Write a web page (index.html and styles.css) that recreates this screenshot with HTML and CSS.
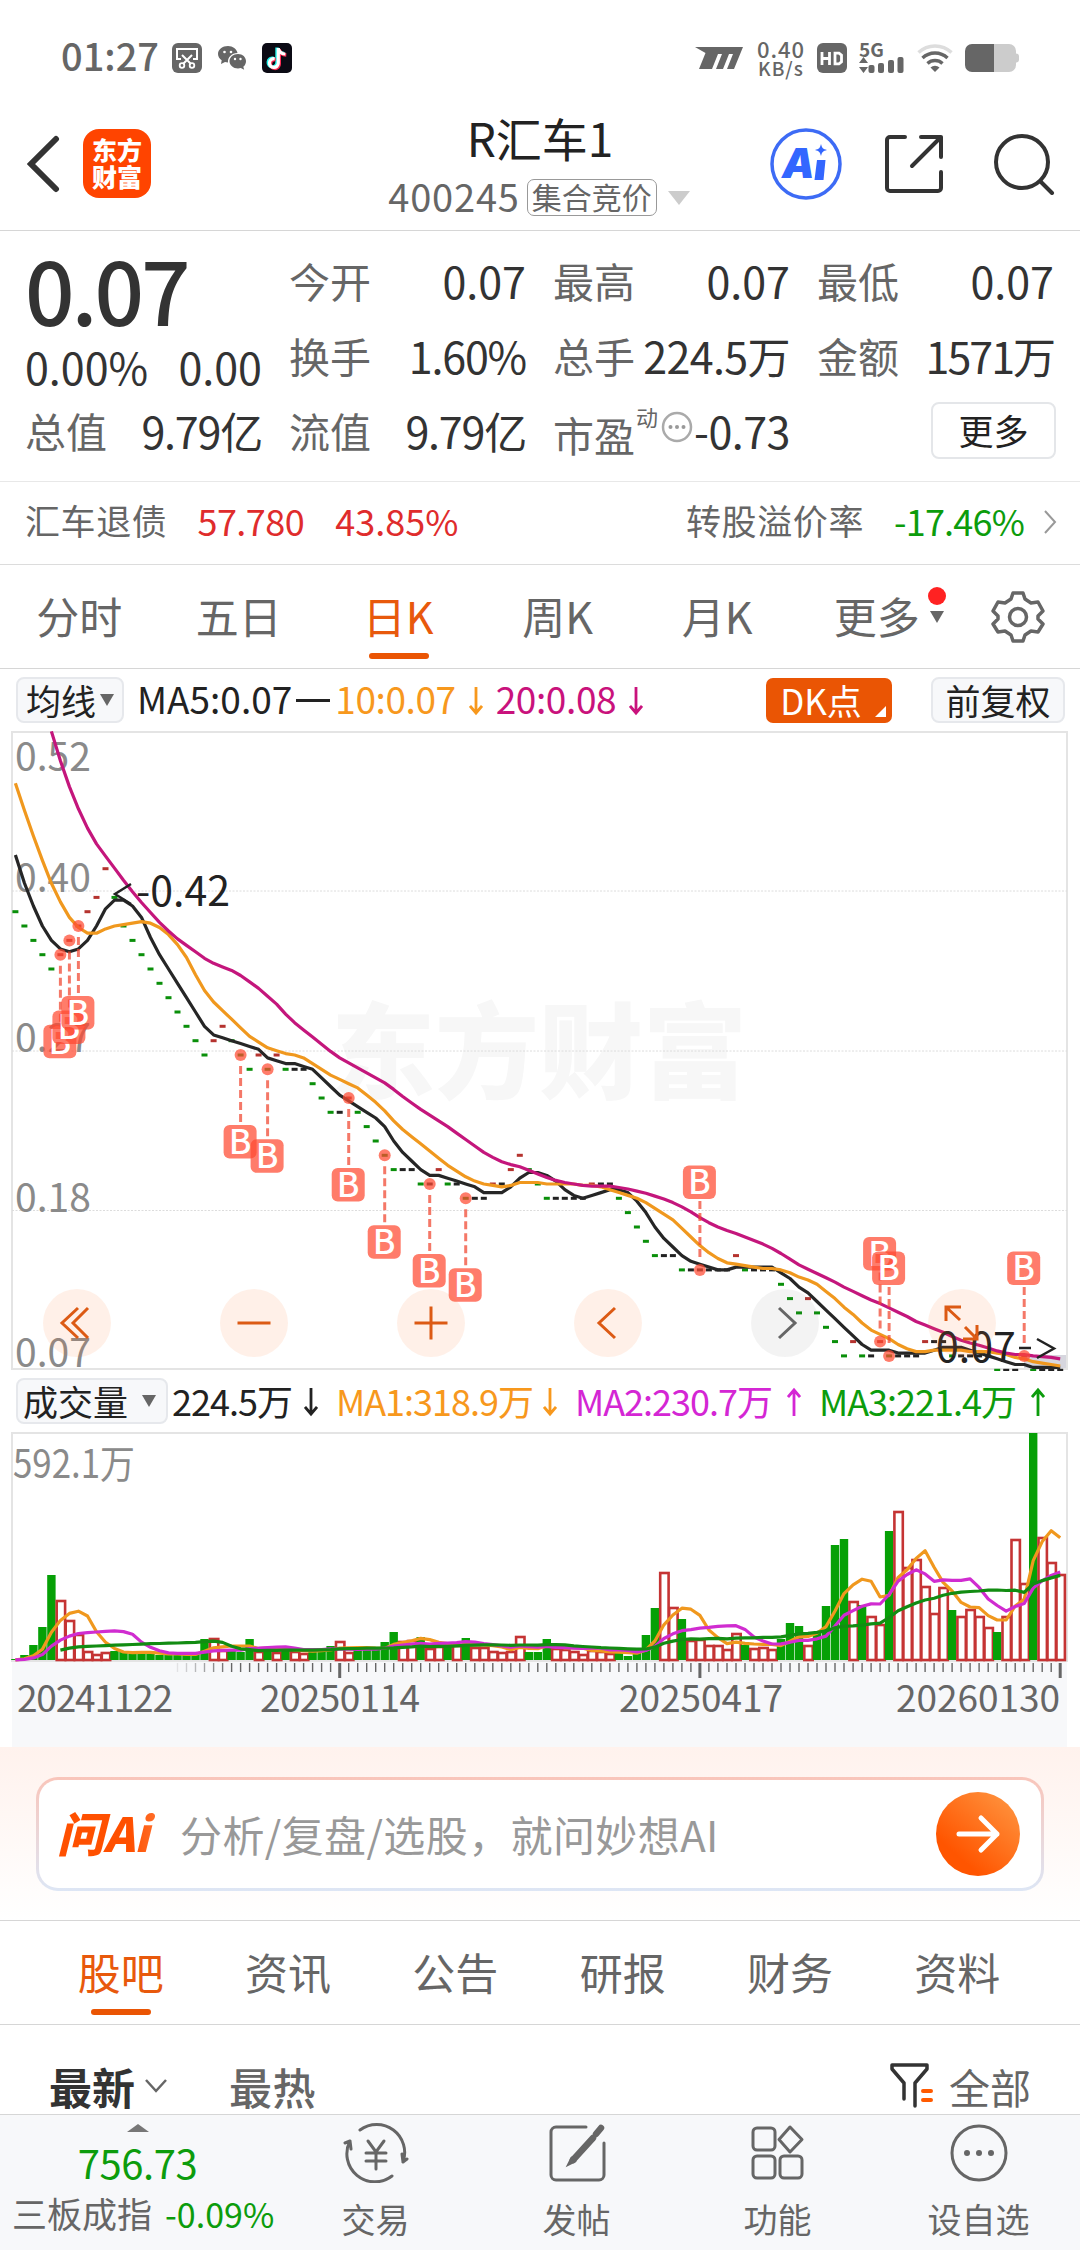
FILE: index.html
```html
<!DOCTYPE html>
<html lang="zh-CN">
<head>
    <meta charset="UTF-8">
    <meta name="viewport" content="width=device-width, initial-scale=1.0">
    <title>R汇车1 400245</title>
    <link rel="stylesheet" href="styles.css">
</head>
<body>
    <div class="status-bar">
        <span class="clock">01:27</span>
        <svg class="st-cut" width="30" height="30" viewBox="0 0 30 30">
            <rect width="30" height="30" rx="6" fill="#666"/>
            <path d="M9 16H5V6h20v10h-4M10 12l9 9M20 12l-9 9" fill="none" stroke="#fff" stroke-width="2"/>
            <circle cx="10" cy="22.500" r="2.300" fill="none" stroke="#fff" stroke-width="1.800"/>
            <circle cx="20" cy="22.500" r="2.300" fill="none" stroke="#fff" stroke-width="1.800"/>
        </svg>
        <svg class="st-wechat" width="28" height="26" viewBox="0 0 28 26">
            <path d="M10 1C4.500 1 0 4.500 0 9c0 2.600 1.400 4.800 3.700 6.300L3 19l4-2 3 .5c-.6-5 3.600-9.500 9.500-9.500C18.700 4 14.800 1 10 1z" fill="#666"/>
            <path d="M20 9c-4.700 0-8.500 3.200-8.500 7.200s3.800 7.200 8.500 7.200l2.800-.4 3.400 1.800-.9-3c1.700-1.400 2.700-3.400 2.700-5.600C28 12.200 24.700 9 20 9z" fill="#666"/>
            <circle cx="6.500" cy="7" r="1.300" fill="#fff"/><circle cx="13" cy="7" r="1.300" fill="#fff"/>
            <circle cx="17" cy="14" r="1.200" fill="#fff"/><circle cx="22.500" cy="14" r="1.200" fill="#fff"/>
        </svg>
        <svg class="st-tiktok" width="30" height="30" viewBox="0 0 30 30">
            <rect width="30" height="30" rx="5" fill="#0b0a14"/>
            <path d="M15 4.500v15a4.400 4.400 0 1 1-3.600-4.300M15 5c.8 3.500 3.600 5.300 7 5.500" fill="none" stroke="#25f4ee" stroke-width="3.400"/>
            <path d="M17.300 6v15a4.400 4.400 0 1 1-3.600-4.300M17.300 6.500c.8 3.500 3.600 5.300 7 5.500" fill="none" stroke="#fe2c55" stroke-width="3.400"/>
            <path d="M16.300 5v15a4.400 4.400 0 1 1-3.600-4.300M16.300 5.500c.8 3.500 3.600 5.300 7 5.500" fill="none" stroke="#fff" stroke-width="3.200"/>
        </svg>
        <span class="spacer"></span>
        <svg class="st-m" width="48" height="24" viewBox="0 0 48 24">
            <path d="M0 1h48l-9 22h-7l6-15h-4l-6 15h-7l6-15h-4l-6 15H4l6.500-16z" fill="#666"/>
        </svg>
        <div class="speed"><b>0.40</b><span>KB/s</span></div>
        <svg class="st-hd" width="30" height="30" viewBox="0 0 30 30">
            <rect width="30" height="30" rx="6" fill="#666"/>
            <path d="M5 9v13M12.500 9v13M5 15.500h7.500M18 10.200h4l2.500 2v6.600l-2.500 2h-4z" fill="none" stroke="#fff" stroke-width="2.800"/>
        </svg>
        <div class="signal">
            <b>5G</b>
            <svg width="45" height="18" viewBox="0 0 45 18" fill="#666">
                <path d="M0 7l4.500-6L9 7zM0 11h9l-4.500 6z"/>
                <rect x="9.500" y="9" width="6" height="8" rx="2"/><rect x="19" y="7" width="6" height="10" rx="2"/>
                <rect x="29" y="4" width="6" height="13" rx="2"/><rect x="38.500" y="1" width="6" height="16" rx="2"/>
            </svg>
        </div>
        <svg class="st-wifi" width="36" height="30" viewBox="0 0 36 30" fill="none" stroke="#666" stroke-width="3.400">
            <path d="M1.500 9.500a24 24 0 0 1 33 0" stroke="#ddd"/>
            <path d="M5.500 15a18 18 0 0 1 25 0M10.500 20.500a11 11 0 0 1 15 0"/>
            <path d="M13.500 24.500a6.500 6.500 0 0 1 9 0L18 29z" fill="#666" stroke="none"/>
        </svg>
        <svg class="st-battery" width="54" height="28" viewBox="0 0 54 28">
            <path d="M29 0h15a7 7 0 0 1 7 7v2.500a3 3 0 0 1 3 3v3a3 3 0 0 1-3 3V21a7 7 0 0 1-7 7H29z" fill="#ccc"/>
            <path d="M7 0h22v28H7a7 7 0 0 1-7-7V7a7 7 0 0 1 7-7z" fill="#666"/>
        </svg>
    </div>

    <header>
        <svg class="back" width="34" height="58" viewBox="0 0 34 58">
            <path d="M29 4L4 29l25 25" fill="none" stroke="#333" stroke-width="6" stroke-linecap="round"/>
        </svg>
        <div class="logo">东方<br>财富</div>
        <div class="title">
            <h1>R汇车1</h1>
            <div class="code">
                <span>400245</span><span class="badge">集合竞价</span><i class="tri-down big"></i>
            </div>
        </div>
        <svg class="ai" width="72" height="74" viewBox="0 0 72 74">
            <circle cx="36" cy="37" r="34" fill="none" stroke="#3d6bf5" stroke-width="3.500"/>
            <text x="12" y="51" class="ai-text">A</text>
            <path d="M47 33h8.500l-2 20h-9zM51 17c1 4 2 5 6 6-4 1-5 2-6 6-1-4-2-5-6-6 4-1 5-2 6-6z" fill="#3366ff"/>
        </svg>
        <svg class="share" width="60" height="60" viewBox="0 0 60 60" fill="none" stroke="#333" stroke-width="4" stroke-linecap="round" stroke-linejoin="round">
            <path d="M21 3H6a3 3 0 0 0-3 3v48a3 3 0 0 0 3 3h48a3 3 0 0 0 3-3V38M37 3h20v20M57 3L28 32"/>
        </svg>
        <svg class="search" width="62" height="62" viewBox="0 0 62 62" fill="none" stroke="#333" stroke-width="4" stroke-linecap="round">
            <circle cx="29" cy="29" r="26"/><path d="M48 49l11 11"/>
        </svg>
    </header>

    <section class="quote">
        <div class="now">
            <div class="price">0.07</div>
            <div class="change"><span>0.00%</span><span>0.00</span></div>
            <div class="cell"><label>总值</label><span class="tight">9.79亿</span></div>
        </div>
        <div class="cells">
            <div class="cell"><label>今开</label><span>0.07</span></div>
            <div class="cell"><label>最高</label><span>0.07</span></div>
            <div class="cell"><label>最低</label><span>0.07</span></div>
            <div class="cell"><label>换手</label><span class="tight">1.60%</span></div>
            <div class="cell"><label>总手</label><span class="snug">224.5万</span></div>
            <div class="cell"><label>金额</label><span class="tighter">1571万</span></div>
            <div class="cell"><label>流值</label><span class="tight">9.79亿</span></div>
            <div class="cell"><label>市盈<sup>动</sup></label>
                <svg class="info" width="32" height="32" viewBox="0 0 32 32">
                    <circle cx="16" cy="16" r="14" fill="none" stroke="#aaa" stroke-width="2.500"/>
                    <g fill="#999"><circle cx="9.500" cy="16" r="2"/><circle cx="16" cy="16" r="2"/><circle cx="22.500" cy="16" r="2"/></g>
                </svg>
                <span class="pe">-0.73</span></div>
            <div class="cell more"><button>更多</button></div>
        </div>
    </section>

    <section class="bond">
        <span class="name">汇车退债</span>
        <span class="red bond-price">57.780</span>
        <span class="red">43.85%</span>
        <span class="spacer"></span>
        <span class="name">转股溢价率</span>
        <span class="green premium">-17.46%</span>
        <svg width="14" height="26" viewBox="0 0 14 26"><path d="M2 2l10 11L2 24" fill="none" stroke="#999" stroke-width="2"/></svg>
    </section>

    <nav class="periods">
        <a>分时</a><a>五日</a><a class="active">日K</a><a>周K</a><a>月K</a>
        <a class="has-more">更多<i class="dot"></i><i class="tri-down"></i></a>
        <svg width="54" height="54" viewBox="0 0 54 54" fill="none" stroke="#666" stroke-width="3.500" stroke-linejoin="round">
            <path d="M22 3h10l2 6 6 4 7-1 5 9-5 5v3l5 5-5 8-7-1-6 4-2 6H22l-2-6-6-4-7 1-5-8 5-5v-3l-5-5 5-9 7 1 6-4z"/>
            <circle cx="27" cy="27" r="8.500"/>
        </svg>
    </nav>

    <div class="legend ma-legend">
        <button class="select">均线<i class="tri-down"></i></button>
        <span class="ma5">MA5:0.07<i class="flat"></i></span>
        <span class="orange">10:0.07<svg class="arrow"><use href="#down"/></svg></span>
        <span class="magenta">20:0.08<svg class="arrow"><use href="#down"/></svg></span>
        <span class="spacer"></span>
        <button class="dk">DK点</button>
        <button class="fq">前复权</button>
    </div>

    <div class="kline">
        <svg id="kline" width="1080" height="640" viewBox="0 731 1080 640"></svg>
        <div class="tools">
            <i><svg viewBox="0 0 68 68"><path d="M35 19L19 34l16 15M45 19L30 34l15 15"/></svg></i>
            <i><svg viewBox="0 0 68 68"><path d="M17.500 34h33"/></svg></i>
            <i><svg viewBox="0 0 68 68"><path d="M17.500 34h33M34 17.500v33"/></svg></i>
            <i><svg viewBox="0 0 68 68"><path d="M41 19L25 34l16 15"/></svg></i>
            <i class="off"><svg viewBox="0 0 68 68"><path d="M28 19l16 15-16 15"/></svg></i>
            <i><svg viewBox="0 0 68 68"><path d="M18 32V18h15M18 18l14 13M49 36v14H35M49 50L37 38"/></svg></i>
        </div>
    </div>

    <div class="legend vol-legend">
        <button class="select">成交量<i class="tri-down"></i></button>
        <span class="v0">224.5万<svg class="arrow"><use href="#down"/></svg></span>
        <span class="orange v1">MA1:318.9万<svg class="arrow"><use href="#down"/></svg></span>
        <span class="purple v2">MA2:230.7万<svg class="arrow"><use href="#up"/></svg></span>
        <span class="green v3">MA3:221.4万<svg class="arrow"><use href="#up"/></svg></span>
    </div>

    <svg id="volume" width="1080" height="315" viewBox="0 1432 1080 315"></svg>

    <section class="ask">
        <div class="ask-box">
            <span class="ask-logo">问Ai</span>
            <span class="ask-hint">分析/复盘/选股，就问妙想AI</span>
            <svg width="84" height="84" viewBox="0 0 84 84">
                <defs><linearGradient id="go" x1="1" y1="0" x2=".3" y2=".8"><stop offset="0" stop-color="#ff9a45"/><stop offset="1" stop-color="#ff5500"/></linearGradient></defs>
                <circle cx="42" cy="42" r="42" fill="url(#go)"/>
                <path d="M23 42h38M45 26l16 16-16 16" fill="none" stroke="#fff" stroke-width="5" stroke-linecap="round" stroke-linejoin="round"/>
            </svg>
        </div>
    </section>

    <nav class="sections">
        <a class="active">股吧</a><a>资讯</a><a>公告</a><a>研报</a><a>财务</a><a>资料</a>
    </nav>

    <div class="sort">
        <b>最新</b>
        <svg width="24" height="16" viewBox="0 0 24 16"><path d="M2 2l10 11L22 2" fill="none" stroke="#666" stroke-width="2.500"/></svg>
        <span class="hot">最热</span>
        <span class="spacer"></span>
        <svg width="44" height="46" viewBox="0 0 44 46" fill="none" stroke="#333" stroke-width="3.500" stroke-linecap="round" stroke-linejoin="round">
            <path d="M14 36V20L2 6V2h35v4L25 20v23"/>
            <path d="M33 28h8M33 37h8" stroke="#ff5a00" stroke-width="4"/>
        </svg>
        <span class="all">全部</span>
    </div>

    <footer>
        <div class="index">
            <i class="tri-up"></i>
            <strong>756.73</strong>
            <div>三板成指<em>-0.09%</em></div>
        </div>
        <a>
            <svg width="66" height="60" viewBox="0 0 66 60" fill="none" stroke="#666" stroke-width="3" stroke-linecap="round">
                <path d="M17 7a28 28 0 0 1 43 32M60 39l4-3M60 39l-1-8M49 53A28 28 0 0 1 7 18M7 18l-5 2M7 18l1 8"/>
                <path d="M25 18l8 11 8-11M33 29v17M23 30h20M23 38h20"/>
            </svg>
            交易
        </a>
        <a>
            <svg width="58" height="60" viewBox="0 0 58 60" fill="none" stroke="#666" stroke-width="3" stroke-linecap="round">
                <path d="M38 4H8a5 5 0 0 0-5 5v43a5 5 0 0 0 5 5h43a5 5 0 0 0 5-5V20"/>
                <path d="M53 5L48 11M45 15L25 37" stroke-width="6.500"/><path d="M24 35l-3 6 6-3"/>
            </svg>
            发帖
        </a>
        <a>
            <svg width="56" height="60" viewBox="0 0 56 60" fill="none" stroke="#666" stroke-width="3" stroke-linejoin="round">
                <rect x="3" y="5" width="22" height="22" rx="4"/><path d="M40 4l12 12.500L40 29 29 16.500z"/>
                <rect x="3" y="33" width="22" height="22" rx="4"/><rect x="30" y="33" width="22" height="22" rx="4"/>
            </svg>
            功能
        </a>
        <a>
            <svg width="60" height="60" viewBox="0 0 60 60" fill="none" stroke="#666" stroke-width="3">
                <circle cx="30" cy="30" r="27"/>
                <g fill="#666" stroke="none"><circle cx="18" cy="30" r="3"/><circle cx="30" cy="30" r="3"/><circle cx="42" cy="30" r="3"/></g>
            </svg>
            设自选
        </a>
    </footer>

    <!-- shared arrows -->
    <svg class="symbols">
        <symbol id="down" viewBox="0 0 14 30"><path d="M7 1v26M1 20l6 7 6-7" fill="none" stroke="currentColor" stroke-width="2.800"/></symbol>
        <symbol id="up" viewBox="0 0 14 30"><path d="M7 29V3M1 10l6-7 6 7" fill="none" stroke="currentColor" stroke-width="2.800"/></symbol>
    </svg>
    <script src="chart.js"></script>
</body>
</html>
```

FILE: styles.css
```css
* {
    box-sizing: border-box;
}

body {
    margin: 0;
    width: 1080px;
    height: 2250px;
    overflow: hidden;
    background: #fff;
    color: #333;
    font-family: "Noto Sans CJK SC", "Noto Sans", sans-serif;
    line-height: 1;
}

svg {
    display: block;
    flex: none;
}

i, em {
    font-style: normal;
}

button {
    font-family: inherit;
    padding: 0;
    white-space: nowrap;
}

.spacer {
    flex: 1;
}

.symbols {
    width: 0;
    height: 0;
}

.red { color: #df2c2c; }
.green { color: #0c9c0c; }
.orange { color: #f7981d; }
.magenta { color: #c9127c; }
.purple { color: #d426d4; }

.tri-down {
    display: inline-block;
    border: 7px solid transparent;
    border-top: 12px solid #666;
    border-bottom: 0;
}

.tri-down.big {
    border-width: 14px 11px 0;
    border-top-color: #ccc;
}

.tri-up {
    border: 11px solid transparent;
    border-bottom: 8px solid #777;
    border-top: 0;
}

/* status bar */

.status-bar {
    display: flex;
    align-items: center;
    height: 115px;
    padding: 1px 61px 0 61px;
    color: #666;
}

.clock {
    font-size: 38px;
    font-weight: 500;
    margin-top: -6px;
    width: 111px;
}

.st-wechat {
    margin: 0 16px 0 16px;
}

.speed {
    width: 50px;
    margin: 0 11px 0 13px;
    text-align: center;
    font-weight: 500;
}

.speed b {
    display: block;
    font-size: 22px;
    font-weight: 500;
    line-height: 20px;
    letter-spacing: 1px;
}

.speed span {
    display: block;
    font-size: 19px;
    line-height: 20px;
    letter-spacing: 1px;
}

.signal {
    width: 46px;
    margin: 0 12px;
}

.signal b {
    display: block;
    font-size: 19px;
    line-height: 14px;
}

.st-battery {
    margin-left: 12px;
}

/* header */

header {
    display: flex;
    align-items: center;
    height: 116px;
    padding: 0 25px 18px 27px;
    border-bottom: 1px solid #d6d6d6;
}

.logo {
    width: 68px;
    height: 69px;
    margin-left: 22px;
    padding-top: 7px;
    border-radius: 16px;
    background: #ff4400;
    color: #fff;
    font-size: 25px;
    font-weight: 900;
    line-height: 27px;
    text-align: center;
}

.title {
    width: 460px;
    margin-left: 159px;
    padding-top: 9px;
    text-align: center;
}

h1 {
    margin: 0 0 8px;
    color: #222;
    font-size: 46px;
    font-weight: 400;
    line-height: 52px;
}

.code {
    display: flex;
    align-items: center;
    justify-content: center;
    height: 54px;
    padding-bottom: 1px;
    margin-left: -2px;
    color: #666;
    font-size: 38px;
}

.code > span:first-child {
    letter-spacing: .8px;
    margin-top: -4px;
}

.badge {
    height: 37px;
    margin: 0 11px 0 7px;
    padding: 0 4px;
    border: 1px solid #999;
    border-radius: 7px;
    font-size: 30px;
    line-height: 32px;
}

.ai {
    margin-left: 0;
}

.ai-text {
    fill: #3366ff;
    font-family: Inter, sans-serif;
    font-size: 41px;
    font-weight: 900;
    font-style: italic;
}

.share {
    margin-left: 42px;
}

.search {
    margin-left: auto;
}

/* quote */

.quote {
    display: flex;
    height: 251px;
    padding: 14px 26px 0;
    border-bottom: 1px solid #e8e8e8;
    font-size: 43px;
}

.now {
    width: 237px;
    margin-left: -1px;
    margin-right: 27px;
}

.price {
    height: 86px;
    font-size: 87px;
    font-weight: 500;
    line-height: 87px;
    letter-spacing: -3px;
}

.change {
    display: flex;
    justify-content: space-between;
    height: 64px;
    line-height: 71px;
}

.cells {
    display: grid;
    grid-template-columns: 237px 237px 237px;
    grid-auto-rows: 75px;
    column-gap: 27px;
}

.cell {
    display: flex;
    align-items: center;
    justify-content: space-between;
    height: 75px;
    padding-bottom: 5px;
    white-space: nowrap;
}

.cell label {
    color: #666;
    font-size: 41px;
}

.snug { letter-spacing: -.6px; }
.tight { letter-spacing: -1.2px; }
.tighter { letter-spacing: -2px; }

sup {
    display: inline-block;
    font-size: 22px;
    line-height: 1;
    height: 0;
    vertical-align: 26px;
    margin-left: 1px;
}

.info {
    margin: -6px 0 0 -3px;
}

.pe {
    margin-left: -5px;
    letter-spacing: -.5px;
}

.more {
    justify-content: flex-end;
}

.more button {
    width: 125px;
    height: 57px;
    margin-right: -2px;
    border: 2px solid #e4e6e9;
    border-radius: 8px;
    background: #fff;
    color: #222;
    font-size: 35px;
    line-height: 46px;
}

/* bond */

.bond {
    display: flex;
    align-items: center;
    height: 83px;
    padding: 0 23px 7px 25px;
    border-bottom: 1px solid #dcdcdc;
    font-size: 36px;
}

.name {
    color: #666;
    font-size: 35px;
    letter-spacing: .6px;
}

.bond-price {
    margin: 0 31px 0 30px;
    letter-spacing: -.5px;
}

.premium {
    margin: 0 19px 0 30px;
    letter-spacing: -.8px;
}

.bond svg {
    margin-top: 4px;
}

/* periods */

.periods {
    display: flex;
    align-items: center;
    height: 104px;
    border-bottom: 1px solid #d6d6d6;
    color: #666;
    font-size: 43px;
}

.periods a {
    width: 159.500px;
    padding: 0 1px 2px 0;
    text-align: center;
}

.active {
    position: relative;
    color: #e8590c;
}

.active::after {
    content: "";
    position: absolute;
    left: 50%;
    bottom: -20px;
    width: 60px;
    height: 6px;
    margin-left: -30px;
    border-radius: 3px;
    background: #ea5504;
}

.has-more {
    position: relative;
}

.has-more .dot {
    position: absolute;
    right: 11px;
    top: -7px;
    width: 18px;
    height: 18px;
    border-radius: 50%;
    background: #f22;
}

.has-more .tri-down {
    position: absolute;
    right: 13px;
    top: 17px;
}

.periods svg {
    margin-left: 34px;
}

/* legends */

.legend {
    display: flex;
    align-items: center;
    height: 62px;
    color: #222;
    font-size: 37px;
}

.legend > span {
    display: flex;
    align-items: center;
    padding-bottom: 3px;
    white-space: nowrap;
}

.legend .spacer {
    flex: 1;
}

.select, .fq {
    height: 46px;
    border: 2px solid #e6e8ec;
    border-radius: 8px;
    background: #f7f8fa;
    color: #222;
    font-size: 35px;
    line-height: 38px;
}

.ma-legend {
    padding: 0 15px 0 16px;
}

.ma-legend .select {
    display: flex;
    align-items: center;
    width: 108px;
    padding-left: 8px;
}

.ma-legend .select .tri-down {
    margin-left: 4px;
}

.ma5 {
    margin-left: 13px;
}

.flat {
    width: 34px;
    height: 3px;
    margin: 4px 5px 0 4px;
    background: #222;
}

.ma-legend .orange, .ma-legend .magenta {
    letter-spacing: -.4px;
}

.ma-legend .magenta {
    margin-left: 13px;
}

.arrow {
    width: 14px;
    height: 30px;
    margin: 4px 0 0 13px;
}

.dk {
    position: relative;
    width: 126px;
    height: 45px;
    margin-right: 39px;
    padding-right: 16px;
    border: 0;
    border-radius: 7px;
    background: #ea5504;
    color: #fff;
    font-size: 35px;
    line-height: 40px;
}

.dk::after {
    content: "";
    position: absolute;
    right: 6px;
    bottom: 6px;
    border-left: 11px solid transparent;
    border-bottom: 11px solid #fff;
}

.fq {
    width: 134px;
}

/* k line chart */

.kline {
    position: relative;
    height: 639px;
}

.tools {
    position: absolute;
    left: 42.500px;
    top: 558px;
    display: flex;
    gap: 109px;
}

.tools i {
    width: 68px;
    height: 68px;
    border-radius: 50%;
    background: rgba(255, 120, 50, .11);
}

.tools .off {
    background: rgba(100, 100, 100, .08);
}

.tools path {
    fill: none;
    stroke: #dc5a14;
    stroke-width: 3;
}

.tools .off path {
    stroke: #666;
}

#kline, #volume {
    font-family: "Noto Sans CJK SC", "Noto Sans", sans-serif;
}

.axis {
    fill: #8a8a8a;
    font-size: 39px;
}

.date {
    fill: #666;
    font-size: 37px;
}

.peak {
    fill: #222;
    font-size: 41px;
}

.watermark {
    fill: #f7f7f7;
    font-size: 104px;
    font-weight: 900;
}

.sign {
    fill: #fff;
    font-size: 34px;
    font-weight: 500;
    text-anchor: middle;
}

.line {
    fill: none;
    stroke-width: 3.200;
    stroke-linejoin: round;
}

.vol-legend {
    padding-left: 16px;
    font-size: 36px;
    letter-spacing: -1px;
}

.vol-legend .select {
    display: flex;
    align-items: center;
    width: 152px;
    padding-left: 5px;
    letter-spacing: 0;
}

.vol-legend .select .tri-down {
    margin-left: 14px;
}

.vol-legend > span {
    justify-content: space-between;
}

.v0 { width: 146px; margin-left: 4px; }
.v1 { width: 221px; margin-left: 18px; }
.v2 { width: 226px; margin-left: 18px; }
.v3 { width: 226px; margin-left: 18px; }

.vol-legend .arrow {
    margin-left: 0;
}

/* ask */

.ask {
    height: 174px;
    padding: 30px 36px 0;
    border-bottom: 1px solid #d6d6d6;
    background: linear-gradient(#fff2ed, #fff);
}

.ask-box {
    display: flex;
    align-items: center;
    height: 114px;
    padding: 0 21px 0 18px;
    border: 3px solid transparent;
    border-radius: 22px;
    background: linear-gradient(#fff, #fff) padding-box, linear-gradient(#f9c5ba, #dde6f5) border-box;
}

.ask-logo {
    width: 123px;
    background: linear-gradient(90deg, #ff5000 60%, #ff8a50);
    -webkit-background-clip: text;
    color: transparent;
    font-size: 47px;
    font-weight: 900;
    font-style: italic;
    line-height: 60px;
    letter-spacing: -.5px;
    white-space: nowrap;
    padding-bottom: 5px;
}

.ask-hint {
    flex: 1;
    color: #999;
    font-size: 42px;
    letter-spacing: .4px;
    white-space: nowrap;
}

/* sections */

.sections {
    display: flex;
    align-items: center;
    height: 104px;
    padding: 0 39px 0 37px;
    border-bottom: 1px solid #d6d6d6;
    color: #666;
    font-size: 43px;
}

.sections a {
    flex: 1;
    text-align: center;
    padding-bottom: 2px;
}

/* sort row */

.sort {
    display: flex;
    align-items: center;
    height: 89px;
    padding: 33px 49px 0 49px;
    color: #666;
    font-size: 43px;
}

.sort b {
    color: #333;
    margin-right: 9px;
}

.hot {
    margin-left: 61px;
    font-weight: 500;
    letter-spacing: .5px;
}

.all {
    margin-left: 15px;
    font-size: 41px;
}

/* bottom bar */

footer {
    display: flex;
    height: 137px;
    border-top: 1px solid #d6d6d6;
    background: #f7f8fa;
    color: #666;
    font-size: 34px;
}

.index {
    display: flex;
    flex-direction: column;
    align-items: center;
    width: 275px;
    padding: 9px 0 0 12px;
    font-size: 35px;
    white-space: nowrap;
}

.index strong {
    color: #0c9c0c;
    font-size: 40px;
    font-weight: 400;
    line-height: 48px;
    letter-spacing: -.4px;
    margin: 6px 12px 0 0;
}

.tri-up {
    margin-right: 12px;
}

.index div {
    margin-top: 9px;
    align-self: flex-start;
}

.index em {
    margin-left: 13px;
    color: #0c9c0c;
    font-size: 34px;
}

footer a {
    display: flex;
    flex-direction: column;
    align-items: center;
    width: 201px;
    padding-top: 8px;
}

footer a svg {
    margin-bottom: 19px;
}
```

FILE: chart.js
```js
// Closes are in ticks (0.01) below 0.42, first 15 are off screen and only feed the averages
const lead = [-35, -31, -27, -24, -20, -17, -14.8, -13, -11, -9, -7, -5.8, -3, -1, 2];
const closes = [
    3, 4, 5, 6, 7, 6, 5, 4, 3, 2, 0, 2, 4, 5, 6, 7, 8, 9, 10, 11,
    12, 13, 12, 11, 12, 13, 14, 13, 14, 13, 14, 14, 14, 15, 16, 17, 17, 16, 17, 18,
    19, 20, 21, 21, 21, 22, 22, 21, 22, 22, 23, 23, 23, 22, 22, 21, 20, 21, 22, 23,
    23, 23, 23, 23, 22, 22, 22, 23, 24, 25, 26, 27, 27, 27, 28, 28, 28, 28, 28, 28,
    27, 28, 28, 28, 28, 29, 30, 31, 30, 31, 32, 33, 34, 33, 34, 34, 33, 34, 34, 34,
    34, 33, 33, 33, 34, 34, 34, 34, 34, 35, 35, 35, 34, 35, 35, 35, 35
];
const volumes = [
    1, 5, 15, 33, 85, 60, 40, 26, 9, 6, 8, 9, 8, 6, 7, 8, 5, 5, 5, 5,
    8, 21, 22, 10, 9, 8, 21, 9, 12, 8, 11, 9, 7, 9, 11, 14, 19, 8, 10, 11,
    11, 18, 28, 19, 20, 23, 12, 14, 13, 15, 22, 13, 13, 9, 8, 9, 24, 8, 8, 21,
    12, 11, 9, 6, 10, 9, 7, 7, 4, 7, 25, 52, 88, 53, 41, 20, 21, 15, 15, 11,
    27, 15, 12, 13, 11, 21, 37, 34, 15, 27, 54, 115, 121, 59, 55, 44, 36, 129, 149, 93,
    101, 74, 47, 73, 50, 44, 51, 44, 33, 28, 44, 121, 77, 227, 123, 98, 86
];
// buy signals: [index, label above the dot]
const signals = [[5], [6], [7], [25], [28], [37], [41], [46], [50], [76, 1], [96, 1], [97, 1], [112, 1]];

const X = i => 15.4 + 9.007 * i;
const Y = v => 868.7 + 14.33 * v;
const round = n => Math.round(n * 10) / 10;

function average(values, offset, period, y, from) {
    const points = [];
    for (let i = from; i < values.length - offset; i++) {
        let sum = 0;
        for (let j = 0; j < period; j++) sum += values[i + offset - j] || 0;
        points.push(round(X(i)) + ',' + round(y(sum / period)));
    }
    return points.join(' ');
}

function polyline(points, color) {
    return `<polyline class="line" points="${points}" stroke="${color}"/>`;
}

function drawKline() {
    let s = '<text class="watermark" x="331" y="1091" textLength="416">东方财富</text>';
    s += '<rect x="1024" y="1355" width="43" height="14" fill="#d6d6de"/>';
    s += '<path d="M12 732h1055v637H12z" fill="none" stroke="#e4e4e4" stroke-width="2"/>';
    [891, 1051, 1210.5].forEach(y => {
        s += `<path d="M12 ${y}h1055" stroke="#dcdcdc" stroke-dasharray="2 1.500"/>`;
    });
    [['0.52', 771], ['0.40', 892], ['0.27', 1052], ['0.18', 1212], ['0.07', 1367]].forEach(([t, y]) => {
        s += `<text class="axis" x="15" y="${y}">${t}</text>`;
    });
    closes.forEach((c, i) => {
        const prev = i ? closes[i - 1] : 2;
        const color = c > prev ? '#0a8f0a' : c < prev ? '#b5332f' : '#222';
        s += `<rect x="${round(X(i) - 3)}" y="${round(Y(c) - 1.5)}" width="6" height="3" fill="${color}"/>`;
    });
    const all = lead.concat(closes);
    s += polyline(average(all, 15, 5, Y, 0), '#262626');
    s += polyline(average(all, 15, 10, Y, 0), '#f0981e');
    s += polyline(average(all, 15, 20, Y, 4), '#c4167c');

    signals.forEach(([i, above]) => {
        const x = round(X(i)), y = round(Y(closes[i]));
        const top = above ? y - 104.5 : y + 70;
        const line = above ? `M${x} ${y - 69}V${y - 12}` : `M${x} ${y + 11}V${y + 68}`;
        s += `<g opacity=".72"><circle cx="${x}" cy="${y}" r="6" fill="#ff4a32"/>
            <path d="${line}" stroke="#f0452f" stroke-width="3" stroke-dasharray="8 4"/>
            <rect x="${x - 17}" y="${top}" width="33" height="33.500" rx="6" fill="#ff4a32"/></g>
            <text class="sign" x="${x - .5}" y="${top + 29}">B</text>`;
    });

    s += '<path d="M131 884l-16 10 16 10M1037 1339l17 9.500-17 9.500M1019 1348h12" fill="none" stroke="#222" stroke-width="2.500"/>';
    s += '<text class="peak" x="136" y="906">-0.42</text>';
    s += '<text class="peak" x="936" y="1362">0.07</text>';
    document.getElementById('kline').innerHTML = s;
}

function drawVolume() {
    const base = 1660;
    const V = v => base - v;
    let s = '<rect x="12" y="1662" width="1055" height="85" fill="#f7f8fa"/>';
    s += '<path d="M12 1661V1433h1055v228z" fill="none" stroke="#e4e4e4" stroke-width="2"/>';
    s += '<text class="axis" x="13" y="1478" textLength="122" lengthAdjust="spacingAndGlyphs">592.1万</text>';
    // days drawn hollow
    const up = [5, 6, 7, 8, 9, 10, 22, 23, 27, 29, 31, 32, 36, 37, 43, 44, 46, 47, 49, 51, 52, 53, 54, 55, 56,
        60, 61, 62, 63, 64, 65, 66, 72, 73, 75, 76, 77, 78, 79, 80, 82, 83, 84, 88, 93, 95, 96, 98, 99, 100,
        101, 102, 103, 105, 106, 107, 108, 110, 111, 112, 114, 115, 116];
    volumes.forEach((v, i) => {
        const x = X(i);
        if (up.includes(i)) {
            s += `<rect x="${round(x - 3.7)}" y="${V(v) + 1}" width="8.400" height="${v - 1}" fill="#fff" stroke="#c53434" stroke-width="2.600"/>`;
        } else {
            s += `<rect x="${round(x - 4.2)}" y="${V(v)}" width="8.400" height="${v}" fill="#06a006"/>`;
        }
    });
    s += polyline(average(volumes, 0, 5, V, 0), '#f0981e');
    s += polyline(average(volumes, 0, 10, V, 0), '#d02cd0');
    s += polyline(average(volumes, 0, 20, V, 5), '#128c12');

    for (let i = 18; i <= 116; i++) {
        const major = i % 40 === 36;
        s += `<path d="M${round(X(i))} 1663v${major ? 15 : 9}" stroke="#666" stroke-width="${major ? 3 : 1.4}" opacity="${Math.min(1, (i - 17) / 7)}"/>`;
    }
    [['20241122', 17, 156], ['20250114', 260, 160], ['20250417', 619, 164], ['20260130', 896, 164]].forEach(([t, x, w]) => {
        s += `<text class="date" x="${x}" y="1712" textLength="${w}">${t}</text>`;
    });
    document.getElementById('volume').innerHTML = s;
}

drawKline();
drawVolume();
```
